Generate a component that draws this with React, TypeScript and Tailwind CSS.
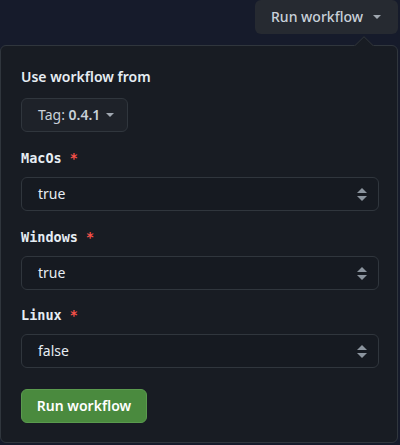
import React from "react";

const sans = { fontFamily: '"Segoe UI", "Noto Sans", "Liberation Sans", Arial, sans-serif' };
const mono = { fontFamily: '"DejaVu Sans Mono", "Liberation Mono", monospace' };

function Caret({ className = "" }: { className?: string }) {
  return (
    <svg width="8" height="4" viewBox="0 0 8 4" className={className}>
      <path d="M0 0 L8 0 L4 4 Z" fill="currentColor" />
    </svg>
  );
}

function UpDown() {
  return (
    <svg width="10" height="13" viewBox="0 0 10 13" className="text-[#8b949e]">
      <path d="M5 0 L10 5 L0 5 Z" fill="currentColor" />
      <path d="M0 8 L10 8 L5 13 Z" fill="currentColor" />
    </svg>
  );
}

function Field({ label, value, mt }: { label: string; value: string; mt: string }) {
  return (
    <div className={mt}>
      <div className="flex items-center h-5 text-[13.5px] font-bold text-[#e6edf3]" style={mono}>
        {label}
        <span className="ml-2 text-[#f85149]">*</span>
      </div>
      <div className="mt-[9px] flex items-center justify-between h-[34px] rounded-md border border-[#30363d] bg-[#161a21] pl-4 pr-[11px]">
        <span className="text-sm text-[#e6edf3]">{value}</span>
        <UpDown />
      </div>
    </div>
  );
}

export default function App() {
  return (
    <div className="w-[400px] h-[445px] bg-[#161b2b] relative overflow-hidden" style={sans}>
      <div className="flex justify-end pr-[2px]">
        <div className="flex items-center h-[34px] w-[143px] rounded-md bg-[#262a31] pl-4 text-sm font-medium text-[#c9d1d9]">
          Run workflow
          <Caret className="ml-[10px] text-[#a0a7b0]" />
        </div>
      </div>
      <div className="relative mt-[11px] w-[398px] h-[398px] rounded-md border border-[#30363d] bg-[#181c23] pl-5 pr-[18px] pt-[21px]">
        <svg
          width="20"
          height="10"
          viewBox="0 0 20 10"
          className="absolute -top-[10px] left-[353px]"
        >
          <path d="M0 10 L10 0 L20 10 Z" fill="#181c23" />
          <path d="M0.5 10 L10 0.7 L19.5 10" fill="none" stroke="#30363d" strokeWidth="1" />
        </svg>
        <div className="h-5 flex items-center text-sm font-semibold text-[#e6edf3]">Use workflow from</div>
        <div className="mt-[11px] inline-flex items-center h-[34px] w-[107px] rounded-md border border-[#30363d] bg-[#1e2229] pl-4 text-sm text-[#c9d1d9]">
          Tag:&nbsp;<span className="font-semibold">0.4.1</span>
          <Caret className="ml-[6px] text-[#a0a7b0]" />
        </div>
        <Field label="MacOs" value="true" mt="mt-4" />
        <Field label="Windows" value="true" mt="mt-4" />
        <Field label="Linux" value="false" mt="mt-[15px]" />
        <div className="mt-[21px] flex items-center justify-center h-[34px] w-[126px] rounded-md border border-[#5a9a4e] bg-[#4a8a3e] text-sm font-semibold text-white">
          Run workflow
        </div>
      </div>
    </div>
  );
}
